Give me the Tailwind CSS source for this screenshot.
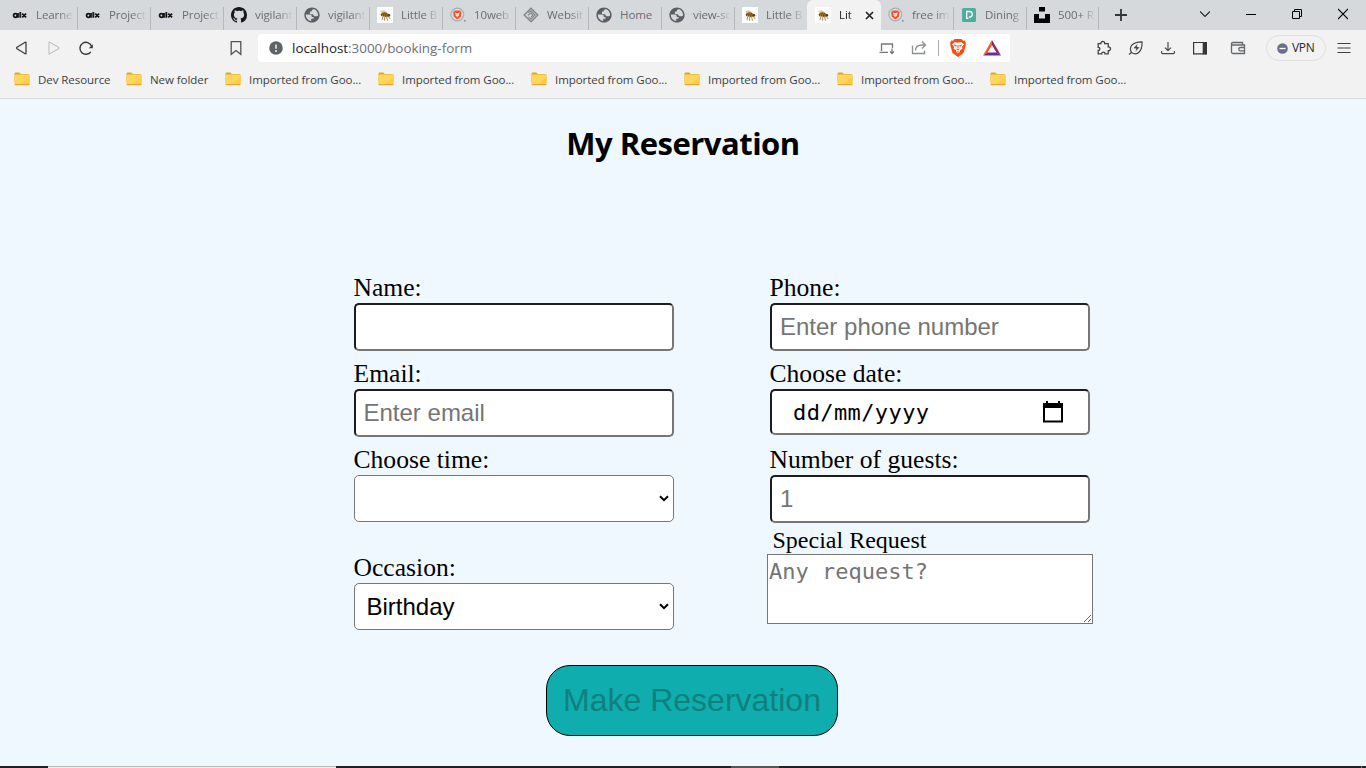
<!DOCTYPE html>
<html lang="en">
<head>
<meta charset="utf-8">
<title>Little Lemon - Booking form</title>
<script src="https://cdn.jsdelivr.net/npm/@tailwindcss/browser@4"></script>
</head>
<body class="w-[1366px] h-[768px] overflow-hidden bg-[#f0f8ff] flex flex-col font-['Open_Sans','Noto_Sans',sans-serif] text-xs">
<svg class="hidden">
  <symbol id="alx" viewBox="0 0 16 16"><g fill="none" stroke="#151515" stroke-width="1.800"><circle cx="3.400" cy="8.500" r="1.800"/><path d="M6 6v4.800M8.300 4.900v5.900M10.200 6.600l3.900 3.700M14.100 6.600l-3.900 3.700"/></g></symbol>
  <symbol id="github" viewBox="0 0 16 16"><path fill="#16181b" d="M8 0C3.58 0 0 3.58 0 8c0 3.54 2.29 6.53 5.47 7.59.4.07.55-.17.55-.38 0-.19-.01-.82-.01-1.49-2.01.37-2.53-.49-2.69-.94-.09-.23-.48-.94-.82-1.13-.28-.15-.68-.52-.01-.53.63-.01 1.08.58 1.23.82.72 1.21 1.87.87 2.33.66.07-.52.28-.87.51-1.07-1.78-.2-3.64-.89-3.64-3.95 0-.87.31-1.59.82-2.15-.08-.2-.36-1.02.08-2.12 0 0 .67-.21 2.2.82.64-.18 1.32-.27 2-.27s1.36.09 2 .27c1.53-1.04 2.2-.82 2.2-.82.44 1.1.16 1.92.08 2.12.51.56.82 1.27.82 2.15 0 3.07-1.87 3.75-3.65 3.95.29.25.54.73.54 1.48 0 1.07-.01 1.93-.01 2.2 0 .21.15.46.55.38A8.01 8.01 0 0 0 16 8c0-4.42-3.58-8-8-8"/></symbol>
  <symbol id="globe" viewBox="1.500 1.500 21 21"><path fill="#5b5f64" d="M12 2C6.480 2 2 6.480 2 12s4.480 10 10 10 10-4.480 10-10S17.520 2 12 2zm-1 17.930c-3.950-.490-7-3.850-7-7.930 0-.100 0-.300.050-.500H8.500c2 0 3.300 1.100 3.300 3h2.200v2.500h-3zM20 12.500c-1 .800-2 1.200-3.200 1.200-2.200 0-3.300-1.200-3.300-2.700H9.300V7.300h2.300c0-1.600.8-2.600 2.400-3l.2-.2c3.400.9 5.800 4 5.800 7.900z"/></symbol>
  <symbol id="bee" viewBox="0 0 16 16"><path fill="#fff" d="M0 0h16v16H0z"/><path d="M3 4 7 3.200 10 5.200 8 7.200l-3-.7z" fill="#d8c8aa"/><path d="M3.300 8C4.500 5.500 6.500 4.800 9 5.500l3 1.600.8 1.900-2.300.9L8 9.700z" fill="#b97d1e"/><path d="m5.200 6.200-.8 3M7.200 5.500l-.6 4M9.300 5.900l-.7 3.900" stroke="#493719" stroke-width=".9"/><circle cx="11.800" cy="8.300" r="1.400" fill="#51401f"/><path d="m6 9-1 4M7.800 9.500l-.3 4.200M9.500 9.700l1 4M11.300 9.500l2 2.500" stroke="#8b7043" stroke-width=".8"/></symbol>
  <symbol id="bravetab" viewBox="0 0 16 16"><circle cx="7.300" cy="7.500" r="6.400" fill="#dfdfe1" stroke="#aaaeb3" stroke-width="1.200"/><path d="M5 3.500h4.600L11.500 5 11 9.500 7.300 12.500 3.700 9.500 3.200 5z" fill="#f5512c"/><path d="m5 5.500 1.500.4h1.700l1.500-.4-.8 3-1.600 1.800-1.600-1.800z" fill="#fbe7e0"/><circle cx="14.800" cy="13.700" r="1" fill="#92979c"/></symbol>
  <symbol id="diamond" viewBox="0 0 16 16"><g fill="none" stroke="#828688"><path d="m8 1.200 6.800 6.800L8 14.800 1.200 8z" stroke-width="1.400"/><path d="M5.300 5.800 8 3.800 12.200 8 8 12.200 5.500 9.800M4.800 8.200 8 6l2 2-2 2" stroke-width="1.100"/></g></symbol>
  <symbol id="dining" viewBox="0 0 16 16"><rect x="1" y="1" width="14" height="14" rx="1.500" fill="#4eae9e"/><path d="M5.700 11.700V4.500h3a2.500 2.500 0 0 1 2.500 2.500v.5A2.500 2.500 0 0 1 8.700 10H8M5 11.300h2.500" fill="none" stroke="#fff" stroke-width="1.300"/></symbol>
  <symbol id="unsplash" viewBox="0 0 16 16"><path d="M5 0h6v4.500H5zM0 7h5v4.500h6V7h5v9H0z"/></symbol>
  <symbol id="folder" viewBox="0 0 16 14"><path d="M.5 2Q.5.6 1.800.6h3.500L6.800 2H14q1.500 0 1.500 1.500v7H.5z" fill="#e0a422"/><rect x=".5" y="2.500" width="15" height="10.500" rx="1" fill="#ffd65c"/><path d="M15.500 5v7.500H6z" fill="#fdcd48"/><path d="M.5 12.200h15v.3q0 .8-1 .8h-13q-1 0-1-.8z" fill="#d5a034"/></symbol>
</svg>

<!-- Tab strip -->
<header class="h-[30px] shrink-0 bg-[#d5d9dc] flex pl-1 text-[#6a6d70]">
  <div class="flex text-[11.5px] tracking-[-0.1px]">
    <div class="w-[74px] h-full flex items-center pl-2"><svg class="size-4 shrink-0"><use href="#alx"/></svg><span class="ml-2 w-[38px] overflow-hidden whitespace-nowrap mask-r-from-60%">Learne</span><i class="ml-auto w-px h-[23px] mt-[7px] bg-[#b4b8bb]"></i></div>
    <div class="w-[73px] h-full flex items-center pl-[7px]"><svg class="size-4 shrink-0"><use href="#alx"/></svg><span class="ml-2 w-[38px] overflow-hidden whitespace-nowrap mask-r-from-60%">Project</span><i class="ml-auto w-px h-[23px] mt-[7px] bg-[#b4b8bb]"></i></div>
    <div class="w-[73px] h-full flex items-center pl-[7px]"><svg class="size-4 shrink-0"><use href="#alx"/></svg><span class="ml-2 w-[38px] overflow-hidden whitespace-nowrap mask-r-from-60%">Project</span><i class="ml-auto w-px h-[23px] mt-[7px] bg-[#b4b8bb]"></i></div>
    <div class="w-[73px] h-full flex items-center pl-[7px]"><svg class="size-4 shrink-0"><use href="#github"/></svg><span class="ml-2 w-[38px] overflow-hidden whitespace-nowrap mask-r-from-60%">vigilant</span><i class="ml-auto w-px h-[23px] mt-[7px] bg-[#b4b8bb]"></i></div>
    <div class="w-[73px] h-full flex items-center pl-[7px]"><svg class="size-4 shrink-0"><use href="#globe"/></svg><span class="ml-2 w-[38px] overflow-hidden whitespace-nowrap mask-r-from-60%">vigilant</span><i class="ml-auto w-px h-[23px] mt-[7px] bg-[#b4b8bb]"></i></div>
    <div class="w-[73px] h-full flex items-center pl-[7px]"><svg class="size-4 shrink-0"><use href="#bee"/></svg><span class="ml-2 w-[38px] overflow-hidden whitespace-nowrap mask-r-from-60%">Little B</span><i class="ml-auto w-px h-[23px] mt-[7px] bg-[#b4b8bb]"></i></div>
    <div class="w-[73px] h-full flex items-center pl-[7px]"><svg class="size-4 shrink-0"><use href="#bravetab"/></svg><span class="ml-2 w-[38px] overflow-hidden whitespace-nowrap mask-r-from-60%">10web</span><i class="ml-auto w-px h-[23px] mt-[7px] bg-[#b4b8bb]"></i></div>
    <div class="w-[73px] h-full flex items-center pl-[7px]"><svg class="size-4 shrink-0"><use href="#diamond"/></svg><span class="ml-2 w-[38px] overflow-hidden whitespace-nowrap mask-r-from-60%">Websit</span><i class="ml-auto w-px h-[23px] mt-[7px] bg-[#b4b8bb]"></i></div>
    <div class="w-[73px] h-full flex items-center pl-[7px]"><svg class="size-4 shrink-0"><use href="#globe"/></svg><span class="ml-2 w-[38px] whitespace-nowrap">Home</span><i class="ml-auto w-px h-[23px] mt-[7px] bg-[#b4b8bb]"></i></div>
    <div class="w-[73px] h-full flex items-center pl-[7px]"><svg class="size-4 shrink-0"><use href="#globe"/></svg><span class="ml-2 w-[38px] overflow-hidden whitespace-nowrap mask-r-from-60%">view-so</span><i class="ml-auto w-px h-[23px] mt-[7px] bg-[#b4b8bb]"></i></div>
    <div class="w-[72px] h-full flex items-center pl-[7px]"><svg class="size-4 shrink-0"><use href="#bee"/></svg><span class="ml-2 w-[38px] overflow-hidden whitespace-nowrap mask-r-from-60%">Little B</span></div>
    <div class="w-[74px] h-full flex items-center pl-2 bg-[#f2f2f2] rounded-t-md text-[#202124]"><svg class="size-4 shrink-0"><use href="#bee"/></svg><span class="ml-2 w-[15px] whitespace-nowrap mask-r-from-70%">Lit</span><svg class="size-[9px] ml-[11px]" viewBox="0 0 9 9"><path d="m1 1 7 7m0-7L1 8" stroke="#222" stroke-width="1.700"/></svg></div>
    <div class="w-[73px] h-full flex items-center pl-[7px]"><svg class="size-4 shrink-0"><use href="#bravetab"/></svg><span class="ml-2 w-[38px] overflow-hidden whitespace-nowrap mask-r-from-60%">free im</span><i class="ml-auto w-px h-[23px] mt-[7px] bg-[#b4b8bb]"></i></div>
    <div class="w-[73px] h-full flex items-center pl-[7px]"><svg class="size-4 shrink-0"><use href="#dining"/></svg><span class="ml-2 w-[38px] overflow-hidden whitespace-nowrap mask-r-from-70%">Dining</span><i class="ml-auto w-px h-[23px] mt-[7px] bg-[#b4b8bb]"></i></div>
    <div class="w-[72px] h-full flex items-center pl-[7px]"><svg class="size-4 shrink-0"><use href="#unsplash"/></svg><span class="ml-2 w-[38px] overflow-hidden whitespace-nowrap mask-r-from-60%">500+ R</span><i class="ml-auto w-px h-[23px] mt-[7px] bg-[#b4b8bb]"></i></div>
  </div>
  <svg class="w-3 h-[30px] ml-4" viewBox="0 0 12 30"><path d="M6 9v12M0 15h12" stroke="#333638" stroke-width="1.800"/></svg>
  <svg class="w-[10px] h-[28px] ml-auto" viewBox="0 0 10 28"><path d="m0 11.500 5 5 5-5" fill="none" stroke="#222" stroke-width="1.100"/></svg>
  <svg class="w-[10px] h-[29px] ml-9" viewBox="0 0 10 29"><path d="M0 14.500h10" stroke="#000"/></svg>
  <svg class="w-[10px] h-[28px] ml-9" viewBox="0 0 10 28"><path d="M.5 11.500h7v7h-7zM2.500 11.500v-2h7v7h-2" fill="none" stroke="#000"/></svg>
  <svg class="w-[10px] h-[28px] ml-9 mr-[18px]" viewBox="0 0 10 28"><path d="m0 9 10 10M10 9 0 19" stroke="#000" stroke-width="1.100"/></svg>
</header>

<!-- Address bar -->
<div class="h-9 shrink-0 bg-[#f2f2f2] flex items-center pl-[14px] pr-[15px]">
  <svg class="size-4" viewBox="0 0 16 16"><path d="M12 2.600v10.800q0 .8-.8.4L3 8.700q-.8-.7 0-1.400l8.200-5.100q.8-.4.800.4z" fill="none" stroke="#3c4043" stroke-width="1.300"/></svg>
  <svg class="size-4 ml-4" viewBox="0 0 16 16"><path d="M3 2.600v10.800q0 .8.800.4L12.500 8.700q.8-.7 0-1.400L3.800 2.200Q3 1.800 3 2.600z" fill="none" stroke="#c2c4c6" stroke-width="1.200"/></svg>
  <svg class="size-4 ml-4" viewBox="0 0 16 16"><path d="M13.500 6A6 6 0 1 0 12.800 11.800" fill="none" stroke="#333639" stroke-width="1.400"/><path d="M14.800 4.300v4H10.800z" fill="#333639"/></svg>
  <svg class="size-4 ml-[134px]" viewBox="0 0 16 16"><path d="M3.200 1.700h9.600v12.600L8 10.500l-4.800 3.800z" fill="none" stroke="#515458" stroke-width="1.300"/></svg>
  <div class="w-[752px] h-7 ml-[14px] bg-white rounded flex items-center pl-[11px] pr-[9px]">
    <svg class="size-[14px]" viewBox="0 0 14 14"><circle cx="7" cy="7" r="6.800" fill="#5f6368"/><path d="M7 3.500v4.300M7 9v2" stroke="#e5e7e9" stroke-width="1.600"/></svg>
    <span class="ml-[9px] mt-px w-[185px] whitespace-nowrap text-[13.400px] text-[#6d7074]"><span class="text-[#202124]">localhost</span>:3000/booking-form</span>
    <svg class="size-4 ml-auto" viewBox="0 0 16 16"><path d="M2.500 11V4h11v4M.5 12.300h8.500M13 8.500v5m-2-2 2 2 2-2" fill="none" stroke="#75787b" stroke-width="1.300"/></svg>
    <svg class="size-4 ml-4" viewBox="0 0 16 16"><path d="M1.500 5.500v8h12v-3M4.500 10.500c0-4 3-5.500 7-5.500h3M11 1.500 14.500 5 11 8.500" fill="none" stroke="#8b8e90" stroke-width="1.300"/></svg>
    <i class="w-px h-4 bg-[#aaa] ml-[11px]"></i>
    <svg class="w-[18px] h-5 ml-[10px]" viewBox="0 0 18 20"><path d="M5.500 1h7L14 2.700l1.700-.2L17 5l-.5 1 .3 1-2.300 8-5.500 4L3.500 15l-2.300-8 .3-1L1 5l1.300-2.500 1.700.2z" fill="#fb4b12"/><path d="m6 4 3 .7 3-.7 3 2.200-2 2.500.3 2-2.300 1.500-.3 1.900L9 15.500l-1.700-1.400L7 12.200l-2.300-1.500.3-2-2-2.500z" fill="#fff"/><path d="m5 7 2.500.8-1 .9m6.500-1.700-2.500.8 1 .9M9 7v3.500M7.500 11 9 12l1.500-1M8 14h2" fill="none" stroke="#fb4b12"/></svg>
    <svg class="w-[18px] h-4 ml-4" viewBox="0 0 18 16"><path d="M9 0v5L4.500 12.500 0 15.500z" fill="#fb542b"/><path d="m9 0 9 15.500-4.500-3L9 5z" fill="#9e1f63"/><path d="m0 15.500 4.500-3h9l4.500 3z" fill="#662d91"/></svg>
  </div>
  <svg class="size-4 ml-[86px]" viewBox="0 0 16 16"><path d="M2.200 3.700h2.700c-.4-3 4.200-3 3.800 0h3.500v3.200c3.100-.3 3.100 4.200 0 3.800v3.200H9c.3-2.500-3.400-2.500-3.200 0H2.200v-3.600c2.200.3 2.200-3.200 0-3z" fill="none" stroke="#404346" stroke-width="1.300"/></svg>
  <svg class="size-4 ml-4" viewBox="0 0 16 16"><path d="M1 14.500 4 12M3.500 12.500C.5 7 4 2 14 1.800c.5 9-4.500 14.700-10.500 10.700z" fill="none" stroke="#404346" stroke-width="1.200"/><path d="M9.500 4 5.500 8.300l3 .2L7.300 11.800 11.500 7.200l-2.800-.2z" fill="#404346"/></svg>
  <svg class="size-4 ml-4" viewBox="0 0 16 16"><path d="M8 2v8.500M5 7.700l3 3 3-3M1.600 11v1.600q0 1 1 1h10.800q1 0 1-1V11" fill="none" stroke="#47494c" stroke-width="1.200"/></svg>
  <svg class="size-4 ml-4" viewBox="0 0 16 16"><path d="M1.600 2.500h12.800v11.300H1.600z" fill="none" stroke="#35383b" stroke-width="1.200"/><path d="M10.700 2h4.100v12.300h-4.100z" fill="#35383b"/></svg>
  <svg class="size-4 ml-[22px]" viewBox="0 0 16 16"><path d="M12.500 5V2.500H3q-1.500 0-1.500 1.300V12q0 1.500 1.500 1.500h11.500V5H3Q1.500 5 1.500 3.800M14.500 7.500h-4a1.700 1.700 0 0 0 0 3.400h4" fill="none" stroke="#65686b" stroke-width="1.300"/></svg>
  <div class="w-[60px] h-[26px] ml-5 rounded-full border border-[#dedfe1] flex items-center pl-[10px] gap-1 text-[#26282b] whitespace-nowrap"><svg class="size-[11px] shrink-0" viewBox="0 0 11 11"><circle cx="5.500" cy="5.500" r="5.300" fill="#696f8d"/><path d="M2.500 5.500h6" stroke="#fff" stroke-width="1.300"/></svg><span class="text-[12px] tracking-[-0.300px]">VPN</span></div>
  <svg class="w-[14px] h-3 ml-auto" viewBox="0 0 14 12"><path d="M.5 1.500h13M.5 6h13M.5 10.500h13" stroke="#404346" stroke-width="1.200"/></svg>
</div>

<!-- Bookmarks bar -->
<nav class="h-[33px] shrink-0 bg-[#f2f2f2] border-b border-[#d4dae0] flex items-center pl-[14px] pb-[5px] text-[#3b3e42] text-[11.500px] tracking-[-0.060px] whitespace-nowrap">
  <a class="w-[112px] flex items-center gap-2"><svg class="w-4 h-[14px]"><use href="#folder"/></svg><span>Dev Resource</span></a>
  <a class="w-[99px] flex items-center gap-2"><svg class="w-4 h-[14px]"><use href="#folder"/></svg><span>New folder</span></a>
  <a class="w-[153px] flex items-center gap-2"><svg class="w-4 h-[14px]"><use href="#folder"/></svg><span>Imported from Goo...</span></a>
  <a class="w-[153px] flex items-center gap-2"><svg class="w-4 h-[14px]"><use href="#folder"/></svg><span>Imported from Goo...</span></a>
  <a class="w-[153px] flex items-center gap-2"><svg class="w-4 h-[14px]"><use href="#folder"/></svg><span>Imported from Goo...</span></a>
  <a class="w-[153px] flex items-center gap-2"><svg class="w-4 h-[14px]"><use href="#folder"/></svg><span>Imported from Goo...</span></a>
  <a class="w-[153px] flex items-center gap-2"><svg class="w-4 h-[14px]"><use href="#folder"/></svg><span>Imported from Goo...</span></a>
  <a class="w-[153px] flex items-center gap-2"><svg class="w-4 h-[14px]"><use href="#folder"/></svg><span>Imported from Goo...</span></a>
</nav>

<main class="flex-1 min-h-0 flex flex-col text-black">
  <h1 class="mt-[22px] h-[44px] leading-[44px] text-center font-bold text-[31px] tracking-[-0.500px] whitespace-nowrap">My Reservation</h1>
  <form class="mt-[108px] flex flex-col">
    <div class="flex pl-[354px] gap-24 font-['Liberation_Serif',serif] text-[25.600px]">
      <div class="w-80 flex flex-col">
        <label class="-ml-[0.5px] h-[30px] leading-[29px]">Name:</label>
        <input class="h-12 shrink-0 rounded-[5px] border-2 border-[#767676] border-t-[#1d1d20] border-l-[#1d1d20] bg-white">
        <label class="-ml-[0.5px] mt-2 h-[30px] leading-[29px]">Email:</label>
        <input placeholder="Enter email" class="h-12 shrink-0 rounded-[5px] border-2 border-[#767676] border-t-[#1d1d20] border-l-[#1d1d20] bg-white pl-[7.5px] font-['Liberation_Sans',sans-serif] text-2xl placeholder:text-[#757575]">
        <label class="-ml-[0.5px] mt-2 h-[30px] leading-[29px]">Choose time:</label>
        <div class="h-[47px] rounded-[5px] border border-[#767676] bg-white flex items-center justify-end pr-1"><svg class="w-[10px] h-[7px]" viewBox="0 0 10 7"><path d="m1 1.200 4 3.900 4-3.900" fill="none" stroke="#000" stroke-width="2"/></svg></div>
        <label class="-ml-[0.5px] mt-[31px] h-[30px] leading-[29px]">Occasion:</label>
        <div class="h-[47px] rounded-[5px] border border-[#767676] bg-white flex items-center justify-between pl-[11.5px] pr-1 font-['Liberation_Sans',sans-serif] text-2xl"><span>Birthday</span><svg class="w-[10px] h-[7px]" viewBox="0 0 10 7"><path d="m1 1.200 4 3.900 4-3.900" fill="none" stroke="#000" stroke-width="2"/></svg></div>
      </div>
      <div class="w-80 flex flex-col">
        <label class="-ml-[0.5px] h-[30px] leading-[29px]">Phone:</label>
        <input placeholder="Enter phone number" class="h-12 shrink-0 rounded-[5px] border-2 border-[#767676] border-t-[#1d1d20] border-l-[#1d1d20] bg-white pl-2 font-['Liberation_Sans',sans-serif] text-2xl placeholder:text-[#757575]">
        <label class="-ml-[0.5px] mt-2 h-[30px] leading-[29px]">Choose date:</label>
        <div class="h-[46px] rounded-[5px] border-2 border-[#767676] border-t-[#1d1d20] border-l-[#1d1d20] bg-white flex items-center justify-between pl-[21px] pr-[25px] font-['DejaVu_Sans_Mono',monospace] text-[22px]"><span class="mt-0.5 tracking-[0.400px]">dd/mm/yyyy</span><svg class="w-5 h-[22px]" viewBox="0 0 20 22"><path d="M1 3h18v17.500H1z" fill="none" stroke="#000" stroke-width="2"/><path d="M0 2h20v5H0zM3 0h2v3H3zM15 0h2v3h-2z"/></svg></div>
        <label class="-ml-[0.5px] mt-[10px] h-[30px] leading-[29px]">Number of guests:</label>
        <input placeholder="1" class="h-12 shrink-0 rounded-[5px] border-2 border-[#767676] border-t-[#1d1d20] border-l-[#1d1d20] bg-white pl-2 font-['Liberation_Sans',sans-serif] text-2xl placeholder:text-[#757575]">
        <label class="mt-[3px] ml-[2.5px] h-7 leading-7 text-2xl">Special Request</label>
        <textarea placeholder="Any request?" class="-mx-[3px] h-[70px] border border-[#767676] bg-white px-px pt-[3px] leading-7 font-['DejaVu_Sans_Mono',monospace] text-[22px] placeholder:text-[#757575] resize"></textarea>
      </div>
    </div>
    <button type="button" class="mt-[35px] ml-[546px] w-[292px] h-[71px] rounded-[24px] border border-black bg-[#0fadad] text-[#10807f] font-['Liberation_Sans',sans-serif] text-[32px] whitespace-nowrap">Make Reservation</button>
  </form>
</main>

<!-- Taskbar edge -->
<footer class="h-0.5 shrink-0 bg-[#202124] flex">
  <i class="ml-12 w-72 h-0.5 bg-[#f2f2f2] border-t border-[#b8b8b8]"></i>
  <i class="ml-[395px] w-12 h-0.5 bg-[#555658]"></i>
  <i class="ml-auto mr-1 w-px h-0.5 bg-[#777]"></i>
</footer>
</body>
</html>
